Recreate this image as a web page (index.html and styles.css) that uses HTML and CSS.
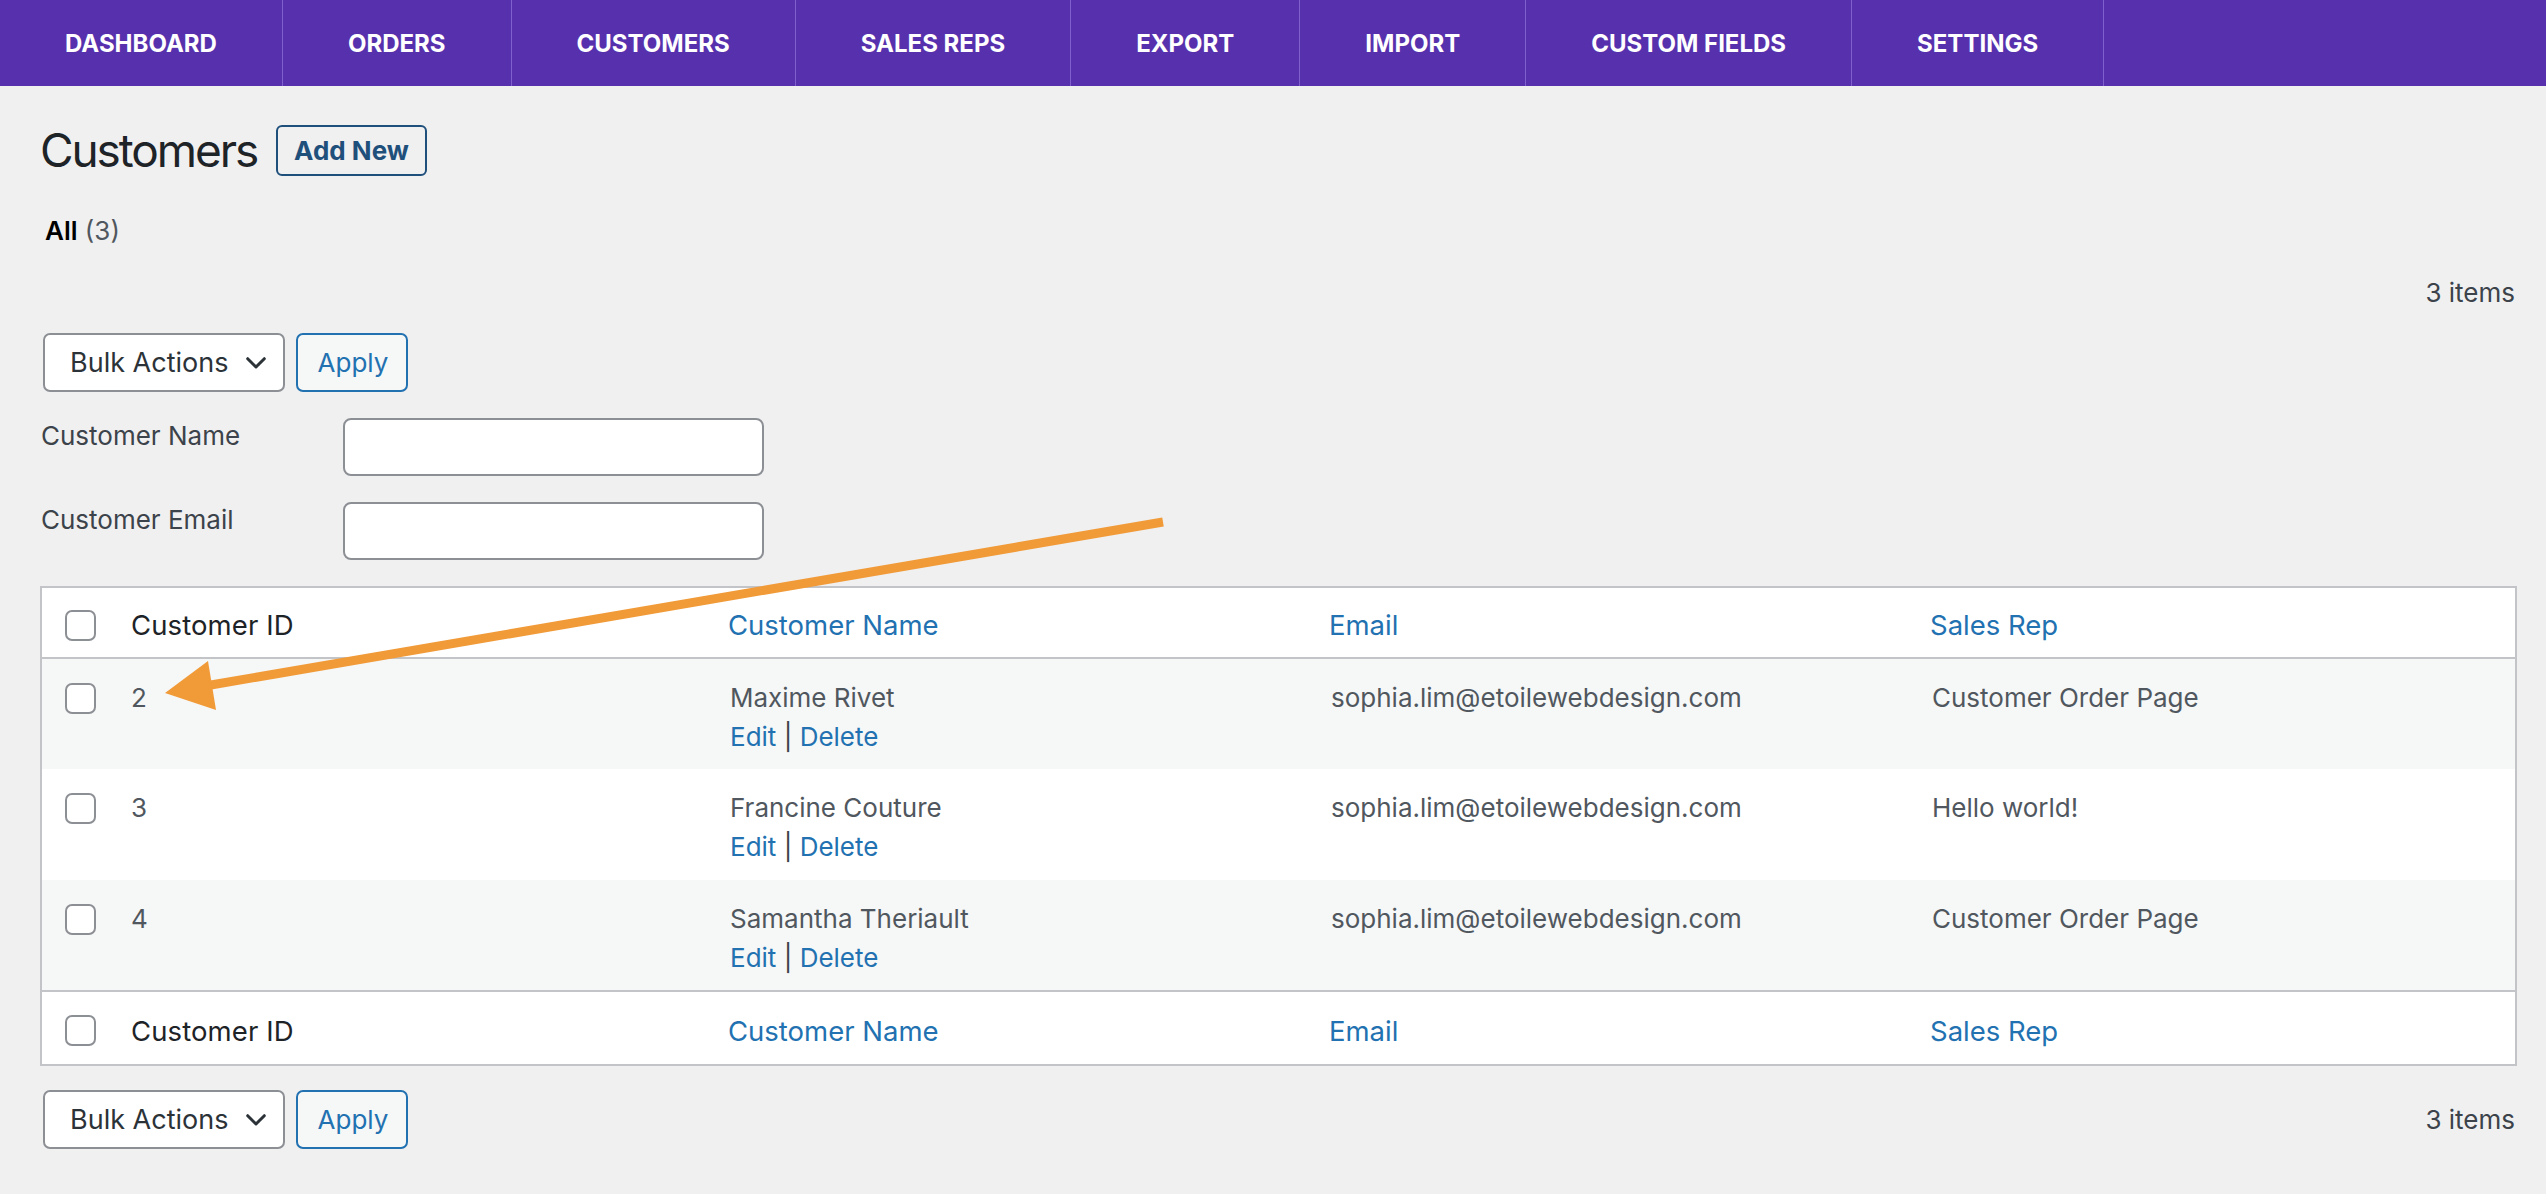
FILE: index.html
```html
<!DOCTYPE html>
<html lang="en">
<head>
<meta charset="utf-8">
<title>Customers</title>
<link rel="stylesheet" href="styles.css">
</head>
<body>
<nav class="topnav">
  <a class="topnav-item" href="#">Dashboard</a>
  <a class="topnav-item" href="#">Orders</a>
  <a class="topnav-item" href="#">Customers</a>
  <a class="topnav-item" href="#">Sales Reps</a>
  <a class="topnav-item" href="#">Export</a>
  <a class="topnav-item" href="#">Import</a>
  <a class="topnav-item" href="#">Custom Fields</a>
  <a class="topnav-item" href="#">Settings</a>
</nav>

<main class="wrap">
  <div class="page-head">
    <h1 class="page-title">Customers</h1>
    <a class="btn-add" href="#">Add New</a>
  </div>

  <div class="subsubsub"><strong>All</strong> <span class="count">(3)</span></div>

  <div class="items-line"><span class="items-count">3 items</span></div>

  <div class="bulk-row">
    <div class="select"><span>Bulk Actions</span><svg class="chev" viewBox="0 0 20 12" width="20" height="12"><path d="M1.7 1.7 L10 10 L18.3 1.7" fill="none" stroke="#2c3338" stroke-width="3" stroke-linecap="round" stroke-linejoin="round"/></svg></div>
    <button class="btn-apply" type="button">Apply</button>
  </div>

  <div class="filters">
    <label class="filter-label">Customer Name</label>
    <input class="filter-input" type="text">
    <label class="filter-label">Customer Email</label>
    <input class="filter-input" type="text">
  </div>

  <table class="list-table">
    <colgroup>
      <col class="col-cb"><col class="col-id"><col class="col-w"><col class="col-w"><col class="col-w">
    </colgroup>
    <thead>
      <tr>
        <th class="cb"><span class="checkbox"></span></th>
        <th class="th-plain">Customer ID</th>
        <th class="th-link"><a href="#">Customer Name</a></th>
        <th class="th-link"><a href="#">Email</a></th>
        <th class="th-link"><a href="#">Sales Rep</a></th>
      </tr>
    </thead>
    <tbody>
      <tr class="alt">
        <td class="cb"><span class="checkbox"></span></td>
        <td class="td-id">2</td>
        <td class="td-data">Maxime Rivet<div class="row-actions"><a href="#">Edit</a> | <a href="#">Delete</a></div></td>
        <td class="td-data">sophia.lim@etoilewebdesign.com</td>
        <td class="td-data">Customer Order Page</td>
      </tr>
      <tr>
        <td class="cb"><span class="checkbox"></span></td>
        <td class="td-id">3</td>
        <td class="td-data">Francine Couture<div class="row-actions"><a href="#">Edit</a> | <a href="#">Delete</a></div></td>
        <td class="td-data">sophia.lim@etoilewebdesign.com</td>
        <td class="td-data">Hello world!</td>
      </tr>
      <tr class="alt">
        <td class="cb"><span class="checkbox"></span></td>
        <td class="td-id">4</td>
        <td class="td-data">Samantha Theriault<div class="row-actions"><a href="#">Edit</a> | <a href="#">Delete</a></div></td>
        <td class="td-data">sophia.lim@etoilewebdesign.com</td>
        <td class="td-data">Customer Order Page</td>
      </tr>
    </tbody>
    <tfoot>
      <tr>
        <th class="cb"><span class="checkbox"></span></th>
        <th class="th-plain">Customer ID</th>
        <th class="th-link"><a href="#">Customer Name</a></th>
        <th class="th-link"><a href="#">Email</a></th>
        <th class="th-link"><a href="#">Sales Rep</a></th>
      </tr>
    </tfoot>
  </table>

  <div class="bulk-row bulk-bottom">
    <div class="select"><span>Bulk Actions</span><svg class="chev" viewBox="0 0 20 12" width="20" height="12"><path d="M1.7 1.7 L10 10 L18.3 1.7" fill="none" stroke="#2c3338" stroke-width="3" stroke-linecap="round" stroke-linejoin="round"/></svg></div>
    <button class="btn-apply" type="button">Apply</button>
    <span class="items-count push">3 items</span>
  </div>
</main>

<svg class="annotation" width="2546" height="1194" viewBox="0 0 2546 1194">
  <line x1="1163" y1="522" x2="205" y2="686" stroke="#f19a38" stroke-width="9"/>
  <polygon points="165,693 208,661 216,710" fill="#f19a38"/>
</svg>
</body>
</html>
```

FILE: styles.css
```css
* { box-sizing: border-box; }

html, body {
  margin: 0;
  padding: 0;
}

body {
  position: relative;
  width: 2546px;
  min-height: 1194px;
  background: #f0f0f1;
  font-family: Inter, "Liberation Sans", Arial, sans-serif;
  font-size: 26px;
  color: #3c434a;
  overflow: hidden;
}

a { text-decoration: none; }

/* top navigation */
.topnav {
  display: flex;
  height: 86px;
  background: #5731ad;
}

.topnav-item {
  display: flex;
  align-items: center;
  padding: 1px 65px 0;
  color: #ffffff;
  font-weight: 700;
  font-size: 24px;
  text-transform: uppercase;
  border-right: 1px solid #7f60cc;
}

/* main */
.wrap {
  padding: 0 31px 0 40px;
}

.page-head {
  display: flex;
  align-items: center;
  gap: 19px;
  margin-top: 39px;
  height: 51px;
}

.page-title {
  margin: 0;
  font-size: 46px;
  font-weight: 400;
  color: #1d2327;
  letter-spacing: -2.1px;
  line-height: 51px;
}

.btn-add {
  display: flex;
  align-items: center;
  height: 51px;
  padding: 0 16px;
  border: 2px solid #1f4f7b;
  border-radius: 6px;
  color: #1f4f7b;
  font-weight: 700;
  font-size: 26px;
}

.subsubsub {
  margin-top: 37px;
  padding-left: 5px;
  line-height: 36px;
  color: #50575e;
}

.subsubsub strong { color: #000; font-weight: 600; }

.items-line {
  display: flex;
  justify-content: flex-end;
  margin-top: 26px;
  line-height: 36px;
}

.items-count {
  color: #3c434a;
  line-height: 36px;
}

.bulk-row {
  display: flex;
  align-items: center;
  gap: 11px;
  margin-top: 22px;
  padding-left: 3px;
}

.select {
  display: flex;
  align-items: center;
  justify-content: space-between;
  width: 242px;
  height: 59px;
  padding: 0 17px 0 25px;
  background: #fff;
  border: 2px solid #8c8f94;
  border-radius: 7px;
  color: #2c3338;
  font-size: 27px;
}

.chev { display: block; }

.btn-apply {
  height: 59px;
  width: 112px;
  padding: 0 0 0 2px;
  background: #f6f7f7;
  border: 2px solid #2271b1;
  border-radius: 7px;
  color: #2271b1;
  font-family: inherit;
  font-size: 26px;
}

/* filters */
.filters {
  display: grid;
  grid-template-columns: 302px 421px;
  row-gap: 26px;
  margin-top: 26px;
  padding-left: 1px;
}

.filter-label {
  color: #3c434a;
  line-height: 36px;
}

.filter-input {
  height: 58px;
  background: #fff;
  border: 2px solid #8c8f94;
  border-radius: 8px;
}

/* table */
.list-table {
  width: 2475px;
  margin-top: 26px;
  border-collapse: collapse;
  table-layout: fixed;
  background: #fff;
  border: 2px solid #c3c4c7;
}

.col-cb { width: 74px; }
.col-id { width: 598px; }
.col-w { width: 601px; }

.list-table thead th,
.list-table tfoot th {
  height: 71px;
  padding: 5px 0 0 15px;
  text-align: left;
  font-weight: 400;
  font-size: 27.5px;
  vertical-align: middle;
  line-height: 34px;
}

.list-table tfoot th { height: 74px; }

.list-table thead tr { border-bottom: 2px solid #c3c4c7; }
.list-table tfoot tr { border-top: 2px solid #c3c4c7; }

.list-table th.cb,
.list-table td.cb {
  padding-left: 23px;
  padding-right: 0;
}

.list-table th.th-plain {
  padding-left: 16px;
  color: #1d2327;
  font-size: 27.5px;
  letter-spacing: 0.1px;
}

.th-link a { color: #2271b1; }

.checkbox {
  display: block;
  width: 31px;
  height: 31px;
  background: #fff;
  border: 2px solid #8c8f94;
  border-radius: 7px;
}

.list-table td {
  vertical-align: top;
  height: 111px;
  padding: 19px 0 0 17px;
  line-height: 39px;
  color: #50575e;
}

.list-table td.cb { padding-top: 24px; }
.list-table td.td-id { padding-left: 16px; }

.list-table tr.alt td { background: #f6f7f7; }

.row-actions { color: #3c434a; }
.row-actions a { color: #2271b1; }

.bulk-bottom { margin-top: 24px; }
.push { margin-left: auto; }

/* annotation overlay */
.annotation {
  position: absolute;
  top: 0;
  left: 0;
  pointer-events: none;
}
```
